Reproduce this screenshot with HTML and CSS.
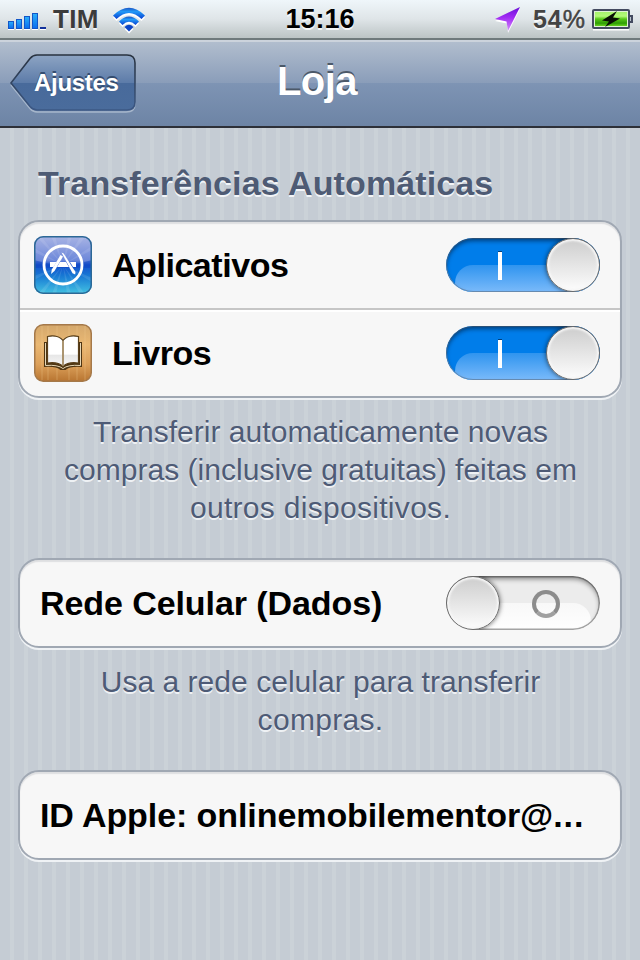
FILE: index.html
```html
<!DOCTYPE html>
<html lang="pt-BR">
<head>
    <meta charset="UTF-8">
    <meta name="viewport" content="width=device-width, initial-scale=1.0">
    <title>Loja</title>
    <link rel="stylesheet" href="styles.css">
</head>
<body>

<div class="status-bar">
    <div class="status-left">
        <svg class="signal" width="40" height="20" viewBox="0 0 40 20">
            <defs>
                <linearGradient id="bars" x1="0" y1="0" x2="0" y2="1">
                    <stop offset="0" stop-color="#2bb0fa"/>
                    <stop offset="1" stop-color="#0a6cee"/>
                </linearGradient>
            </defs>
            <path d="M0 19h6v1H0zM8 19h6v1H8zM16 19h6v1h-6zM24 19h6v1h-6zM32 19h6v1h-6z" fill="#fff"/>
            <g fill="url(#bars)" stroke="#1256c8" stroke-width="1">
                <rect x=".5" y="11.500" width="5" height="7"/>
                <rect x="8.500" y="9.500" width="5" height="9"/>
                <rect x="16.500" y="6.500" width="5" height="12"/>
                <rect x="24.500" y="3.500" width="5" height="15"/>
            </g>
            <rect x="32" y="17" width="6" height="2" fill="#12329c"/>
        </svg>
        <span class="carrier">TIM</span>
        <svg class="wifi" width="34" height="28" viewBox="0 0 34 28">
            <defs>
                <linearGradient id="wave" x1="0" y1="0" x2="0" y2="1">
                    <stop offset="0" stop-color="#1a55c4"/>
                    <stop offset=".35" stop-color="#229af8"/>
                    <stop offset="1" stop-color="#0a3fd0"/>
                </linearGradient>
            </defs>
            <path d="M1 10.500Q17-5 33 10.500L29.500 14Q17 2 4.500 14ZM7 16.500Q17 6.500 27 16.500L23.500 20Q17 13.500 10.500 20ZM12.500 22Q17 17.500 21.500 22L17 26.500Z" fill="#fff"/>
            <path d="M1 8.500Q17-7 33 8.500L29.500 12Q17 0 4.500 12Z" fill="url(#wave)"/>
            <path d="M7 14.500Q17 4.500 27 14.500L23.500 18Q17 11.500 10.500 18Z" fill="url(#wave)"/>
            <path d="M12.500 20Q17 15.500 21.500 20L17 24.500Z" fill="#0c45c8"/>
        </svg>
    </div>
    <div class="clock">15:16</div>
    <div class="status-right">
        <svg class="location" width="26" height="28" viewBox="0 0 26 28">
            <defs>
                <linearGradient id="arrow" x1="0" y1="0" x2="0" y2="1">
                    <stop offset="0" stop-color="#6a10d8"/>
                    <stop offset=".45" stop-color="#a32cf4"/>
                    <stop offset="1" stop-color="#d490fa"/>
                </linearGradient>
            </defs>
            <path d="M25 4 0 16l12 2.500L13 28z" fill="#fff"/>
            <path d="M25 2 0 14l11.500 2.500L13 26z" fill="url(#arrow)"/>
        </svg>
        <span class="percent">54<span class="percent-sign">%</span></span>
        <svg class="battery" width="42" height="22" viewBox="0 0 42 22">
            <defs>
                <linearGradient id="charge" x1="0" y1="0" x2="0" y2="1">
                    <stop offset="0" stop-color="#a6f26c"/>
                    <stop offset=".3" stop-color="#b4f97a"/>
                    <stop offset=".5" stop-color="#58c818"/>
                    <stop offset=".8" stop-color="#2f9c04"/>
                    <stop offset="1" stop-color="#66d41e"/>
                </linearGradient>
            </defs>
            <path d="M1 20.500h36" stroke="#fff" stroke-width="2"/>
            <path d="M38 7h2v6h-2" fill="#b9c3cc" stroke="#434a60" stroke-width="2"/>
            <rect x="1" y="1" width="36" height="18" rx="1" fill="#e0f2d4" stroke="#434a60" stroke-width="2"/>
            <rect x="3" y="3" width="32" height="14" fill="url(#charge)"/>
            <path d="M25 2 10 11.500l7 1L13 18 28 9.500l-7-1z" fill="#0a0f05"/>
        </svg>
    </div>
</div>

<div class="nav-bar">
    <a class="back" href="#">
        <svg class="back-shape" width="128" height="62" viewBox="0 0 128 62">
            <defs>
                <linearGradient id="back" x1="0" y1="0" x2="0" y2="1">
                    <stop offset="0" stop-color="#8da4c3"/>
                    <stop offset=".5" stop-color="#5d7ca9"/>
                    <stop offset=".51" stop-color="#486a9b"/>
                    <stop offset="1" stop-color="#4a6c9c"/>
                </linearGradient>
                <linearGradient id="backEdge" x1="0" y1="0" x2="0" y2="1">
                    <stop offset="0" stop-color="#28323f"/>
                    <stop offset="1" stop-color="#3c5885"/>
                </linearGradient>
            </defs>
            <path d="M28 5h89q9 0 9 9v38q0 8-9 8H28q-4 0-7-3.500L2 33" fill="none" stroke="#a6b6cb" stroke-width="1.500"/>
            <path d="M28 3h90q8 0 8 8v39q0 8-8 8H28q-4 0-7-3.500L2 31 21 6.500Q24 3 28 3z" fill="url(#back)" stroke="url(#backEdge)" stroke-width="1.600"/>
        </svg>
        <span class="back-label">Ajustes</span>
    </a>
    <h1 class="title">Loja</h1>
</div>

<div class="content">
    <h2 class="section-title">Transferências Automáticas</h2>

    <div class="group">
        <div class="row">
            <svg class="app-icon" width="58" height="58" viewBox="0 0 58 58">
                <defs>
                    <linearGradient id="store" x1="0" y1="0" x2="0" y2="1">
                        <stop offset="0" stop-color="#a9b4e4"/>
                        <stop offset=".42" stop-color="#6d88da"/>
                        <stop offset=".5" stop-color="#1450cc"/>
                        <stop offset=".68" stop-color="#1778d4"/>
                        <stop offset="1" stop-color="#43c3e2"/>
                    </linearGradient>
                    <clipPath id="round"><rect width="58" height="58" rx="9"/></clipPath>
                </defs>
                <g clip-path="url(#round)">
                    <rect width="58" height="58" fill="url(#store)"/>
                    <path d="M29 29 2 0h5zM29 29 17 0h4zM29 29 34 0h4zM29 29 47 0h5zM29 29 58 10v4zM29 29 0 12v4zM29 29 0 40v4zM29 29 4 58h5zM29 29 18 58h4zM29 29 33 58h4zM29 29 46 58h5zM29 29 58 42v4z" fill="#fff" opacity=".1"/>
                    <path d="M0 24Q29 33 58 24V32H0z" fill="#0c43c4" opacity=".5"/>
                </g>
                <rect x=".75" y=".75" width="56.500" height="56.500" rx="8.500" fill="none" stroke="#2c6896" stroke-width="1.500"/>
                <circle cx="29" cy="29" r="19" fill="none" stroke="#fff" stroke-width="2.800"/>
                <path d="M16 26h6.500l-3 5H16zM26 26h6l3 5H23zM36 26h6v5h-3z" fill="#fff"/>
                <path d="M26.500 19 29 20.500 20.500 35 17 38l.8-4.500z" fill="#fff"/>
                <path d="m27.500 16.500 2.200 1L41.500 36l-.3 2.500-2.700-1.300z" fill="#fff"/>
            </svg>
            <span class="label tight">Aplicativos</span>
            <div class="switch on"><span class="gloss"></span><span class="mark-on"></span><span class="knob"></span></div>
        </div>
        <div class="row">
            <svg class="app-icon" width="58" height="58" viewBox="0 0 58 58">
                <defs>
                    <linearGradient id="wood" x1="0" y1="0" x2="0" y2="1">
                        <stop offset="0" stop-color="#d4a86c"/>
                        <stop offset=".35" stop-color="#eab873"/>
                        <stop offset=".7" stop-color="#dca05a"/>
                        <stop offset="1" stop-color="#b87531"/>
                    </linearGradient>
                    <linearGradient id="page" x1="0" y1="0" x2="0" y2="1">
                        <stop offset=".6" stop-color="#fff"/>
                        <stop offset=".62" stop-color="#e6e6e6"/>
                        <stop offset="1" stop-color="#f8f8f8"/>
                    </linearGradient>
                </defs>
                <rect x=".75" y=".75" width="56.500" height="56.500" rx="8.500" fill="url(#wood)" stroke="#a5794a" stroke-width="1.500"/>
                <path d="M8 2v54M14 2v54M23 2v54M35 2v54M43 2v54M51 2v54" stroke="#f6d296" stroke-width="1.500" opacity=".2"/>
                <path d="M10 18h3v-6q10-2 16 4 6-6 16-4v6h3v25q-12-1-16.500 3h-5Q22 42 10 43z" fill="#4e3512"/>
                <path d="M11.500 19v22.500q12.500-1 17.500 3 5-4 17.500-3V19" fill="none" stroke="#e5d6b6" stroke-width="1"/>
                <path d="M13.500 12.500q11-2 15.500 4v26q-5-5-15.500-3.500zM44.500 12.500q-11-2-15.500 4v26q5-5 15.500-3.500z" fill="url(#page)" stroke="#5a401b" stroke-width="1.200"/>
                <path d="M29 17v25" stroke="#b09870" stroke-width="1.500"/>
            </svg>
            <span class="label tight">Livros</span>
            <div class="switch on"><span class="gloss"></span><span class="mark-on"></span><span class="knob"></span></div>
        </div>
    </div>
    <p class="note">
        Transferir automaticamente novas<br>
        compras (inclusive gratuitas) feitas em<br>
        <span class="wide">outros dispositivos.</span>
    </p>

    <div class="group">
        <div class="row plain">
            <span class="label">Rede Celular (Dados)</span>
            <div class="switch off"><span class="gloss"></span><span class="mark-off"></span><span class="knob"></span></div>
        </div>
    </div>
    <p class="note short">
        Usa a rede celular para transferir<br>
        <span class="wide">compras.</span>
    </p>

    <div class="group">
        <div class="row plain">
            <span class="label">ID Apple: onlinemobilementor@<span class="dots">...</span></span>
        </div>
    </div>
</div>

</body>
</html>
```
FILE: styles.css
```css
* {
    box-sizing: border-box;
}
body {
    margin: 0;
    width: 640px;
    height: 960px;
    overflow: hidden;
    font-family: "Liberation Sans", Arial, sans-serif;
    background: repeating-linear-gradient(90deg, #c5ccd4 0, #c5ccd4 10px, #cbd2d8 10px, #cbd2d8 14px);
}
.status-bar {
    display: grid;
    grid-template-columns: 1fr auto 1fr;
    align-items: center;
    height: 40px;
    padding: 0 6px 0 8px;
    background: linear-gradient(#eff6fa, #dfe5e8 50%, #bcc4c5);
    border-bottom: 2px solid #6f7a7c;
    font-weight: bold;
    text-shadow: 0 2px 0 rgba(255, 255, 255, 0.8);
}
.status-left,
.status-right {
    display: flex;
    align-items: center;
}
.status-right {
    justify-content: flex-end;
}
.signal {
    margin-top: 2px;
}
.carrier {
    margin-left: 5px;
    padding-top: 1px;
    font-size: 26px;
    letter-spacing: 0.3px;
    color: #3c3c3c;
}
.wifi {
    margin-left: 13px;
    margin-top: 3px;
}
.clock {
    padding: 1px 2px 0 0;
    font-size: 27px;
    color: #000;
}
.percent {
    margin: 0 6px 0 12px;
    padding-top: 1px;
    font-size: 25px;
    letter-spacing: 1px;
    color: #444;
}
.percent-sign {
    font-weight: normal;
    -webkit-text-stroke: 0.5px #444;
}
.battery {
    margin-top: 2px;
}
.nav-bar {
    display: grid;
    grid-template-columns: 1fr auto 1fr;
    align-items: center;
    height: 88px;
    padding: 0 9px;
    background: linear-gradient(#b3bfcf, #8a9db9 50%, #7e94b4 50%, #6d84a5);
    border-bottom: 2px solid #2d3038;
    box-shadow: inset 0 2px 0 #ccd3dc;
}
.back {
    display: grid;
    width: 128px;
    color: #fff;
    text-decoration: none;
}
.back-shape,
.back-label {
    grid-area: 1 / 1;
}
.back-label {
    align-self: center;
    padding: 0 0 1px 25px;
    font-size: 24px;
    font-weight: bold;
    letter-spacing: -0.3px;
    text-shadow: 0 -2px 0 #354d70;
}
.title {
    margin: 0;
    padding: 0 6px 4px 0;
    font-size: 40px;
    letter-spacing: -0.5px;
    color: #fff;
    text-shadow: 0 -2px 0 #4c5969;
}
.content {
    padding: 0 18px;
}
.section-title {
    height: 92px;
    margin: 0;
    padding: 35px 0 0 20px;
    font-size: 34px;
    line-height: 40px;
    letter-spacing: 0.12px;
    color: #4e5b74;
    text-shadow: 0 2px 0 #f2f5f8;
    white-space: nowrap;
}
.group {
    border: 2px solid #a0a8b3;
    border-radius: 21px;
    background: #f7f7f7;
    box-shadow: 0 2px 0 #eff2f5, inset 0 2px 1px #dedfe1;
}
.row {
    display: flex;
    align-items: center;
    height: 86px;
    padding: 0 20px 0 14px;
}
.row + .row {
    height: 88px;
    border-top: 2px solid #c6c6c6;
    box-shadow: inset 0 2px 0 #fff;
}
.row.plain {
    padding-left: 20px;
}
.app-icon {
    margin-right: 20px;
}
.label {
    flex: 1;
    font-size: 34px;
    font-weight: bold;
    line-height: 40px;
    letter-spacing: -0.08px;
    color: #000;
    white-space: nowrap;
}
.label.tight {
    letter-spacing: -0.45px;
}
.label .dots {
    letter-spacing: 1px;
}
.note {
    height: 160px;
    margin: 0;
    padding: 15px 0 0 1px;
    font-size: 30px;
    line-height: 38px;
    letter-spacing: 0.03px;
    text-align: center;
    color: #4e5b76;
    text-shadow: 0 2px 0 #eef1f4;
    white-space: nowrap;
}
.note.short {
    height: 122px;
}
.note .wide {
    letter-spacing: 0.3px;
}
.switch {
    position: relative;
    width: 154px;
    height: 54px;
    border-radius: 27px;
    overflow: hidden;
}
.switch.on {
    background: #007dea;
}
.switch.off {
    background: #ececec;
}
/* everything inside a switch is stacked over its track */
.gloss,
.mark-on,
.mark-off,
.knob,
.switch::after {
    position: absolute;
}
.gloss {
    left: 9px;
    right: 9px;
    top: 27px;
    height: 27px;
    border-radius: 18px 18px 0 0;
}
.on .gloss {
    background: linear-gradient(#2f94ef, #7abafa);
}
.off .gloss {
    background: linear-gradient(#f8f8f8, #fff);
}
.switch::after {
    content: "";
    inset: 0;
    border-radius: 27px;
}
.switch.on::after {
    box-shadow: inset 0 3px 4px rgba(0, 40, 80, 0.7), inset 0 0 0 1px #6a8fb4;
}
.switch.off::after {
    box-shadow: inset 0 3px 5px rgba(0, 0, 0, 0.45), inset 0 0 0 1.5px #aaa;
}
.mark-on {
    left: 52px;
    top: 14px;
    width: 4px;
    height: 28px;
    background: #fff;
    box-shadow: 0 -1px 0 #033f7c;
}
.mark-off {
    left: 86px;
    top: 14px;
    width: 28px;
    height: 28px;
    border: 4px solid #8c8c8c;
    border-bottom-color: #a0a0a0;
    border-radius: 50%;
}
.knob {
    z-index: 1;
    top: 0;
    width: 54px;
    height: 54px;
    border: 1px solid #6c6c6c;
    border-radius: 50%;
    background: linear-gradient(#cdcdcd, #fdfdfd);
    box-shadow: inset 0 0 2px 2px #f6f6f6, 0 0 5px rgba(0, 0, 0, 0.6);
}
.on .knob {
    right: 0;
}
.off .knob {
    left: 0;
}
```
